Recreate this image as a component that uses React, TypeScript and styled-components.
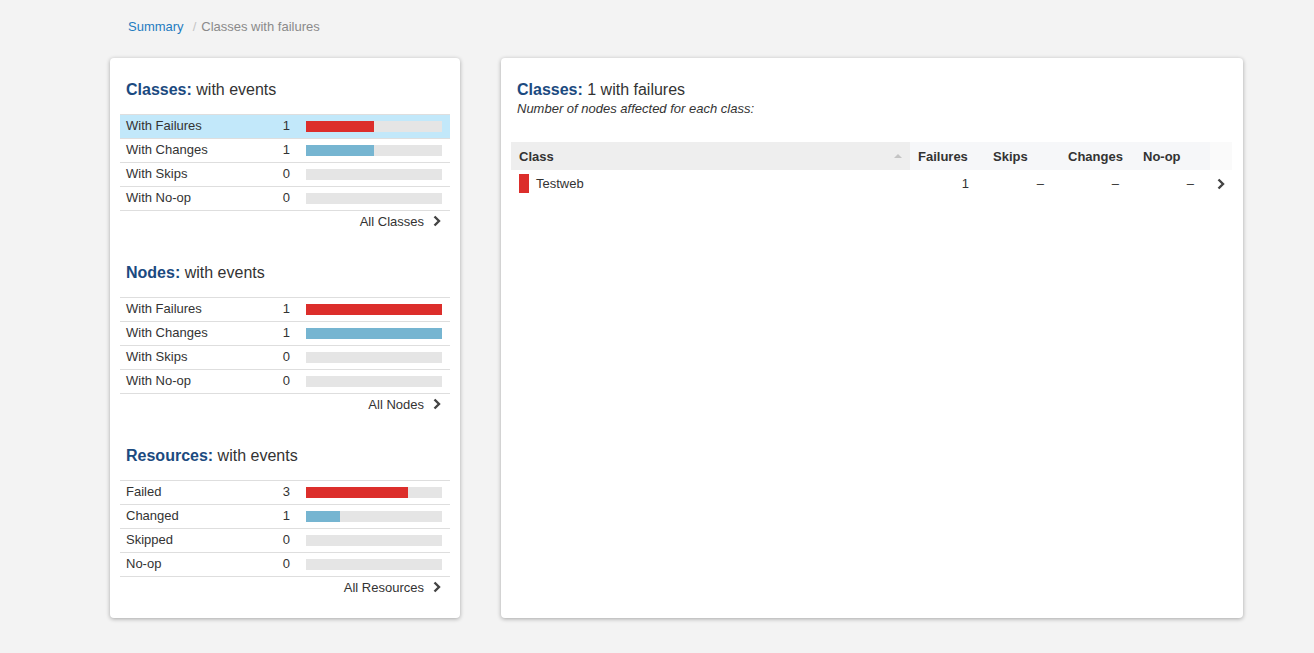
import React from "react";
import styled, { createGlobalStyle } from "styled-components";

const Global = createGlobalStyle`
  html, body { margin: 0; padding: 0; background: #f3f3f3; }
  body { font-family: "Liberation Sans", Arial, Helvetica, sans-serif; color: #333; }
`;

const Page = styled.div`
  width: 1314px;
  height: 653px;
  box-sizing: border-box;
  padding: 17px 0 0 110px;
  overflow: hidden;
`;

const Breadcrumb = styled.div`
  display: flex;
  align-items: center;
  height: 18px;
  padding-left: 18px;
  font-size: 13px;
  color: #8a8a8a;
`;

const Crumb = styled.span`
  color: #1f7cc0;
`;

const Sep = styled.span`
  color: #c4c4c4;
  margin: 0 5px 0 9px;
`;

const Columns = styled.div`
  display: flex;
  gap: 41px;
  margin-top: 23px;
`;

const Card = styled.div<{ $w: number }>`
  width: ${(p) => p.$w}px;
  height: 560px;
  box-sizing: border-box;
  background: #fff;
  border-radius: 4px;
  box-shadow: 0 1px 4px rgba(0, 0, 0, 0.32);
  padding: 22px 10px 20px;
`;

const Heading = styled.h2`
  margin: 0;
  padding-left: 6px;
  font-size: 16px;
  line-height: 20px;
  font-weight: normal;
  color: #333;
  b {
    color: #1b4a80;
    font-weight: bold;
  }
`;

const Section = styled.div`
  margin-bottom: 30px;
  &:last-child { margin-bottom: 0; }
`;

const StatTable = styled.div`
  margin-top: 14px;
  border-top: 1px solid #dedede;
`;

const StatRow = styled.div<{ $active?: boolean }>`
  display: flex;
  align-items: center;
  height: 24px;
  box-sizing: border-box;
  border-bottom: 1px solid #dedede;
  padding: 0 8px 0 6px;
  font-size: 13px;
  background: ${(p) => (p.$active ? "#c2e8fa" : "transparent")};
`;

const Label = styled.span`
  flex: 1;
  margin-top: -2px;
`;

const Count = styled.span`
  width: 20px;
  text-align: right;
  margin-right: 16px;
  margin-top: -2px;
`;

const Track = styled.div`
  width: 136px;
  height: 11px;
  background: #e5e5e5;
  display: flex;
`;

const Fill = styled.div<{ $kind: "fail" | "change" }>`
  height: 100%;
  background: ${(p) => (p.$kind === "fail" ? "#dc2e2b" : "#76b5d1")};
`;

const MoreLink = styled.div`
  display: flex;
  justify-content: flex-end;
  align-items: center;
  gap: 9px;
  height: 22px;
  padding: 0 9px 2px 0;
  box-sizing: border-box;
  font-size: 13px;
  color: #333;
`;

const Chevron = () => (
  <svg width="8" height="12" viewBox="0 0 8 12">
    <path d="M1.5 1.5 L6 6 L1.5 10.5" fill="none" stroke="#444" strokeWidth="2.4" />
  </svg>
);

const Subtitle = styled.div`
  padding-left: 6px;
  font-size: 13px;
  line-height: 16px;
  font-style: italic;
  color: #333;
  margin-top: 1px;
`;

const Grid = styled.div`
  display: grid;
  grid-template-columns: 399px 75px 75px 75px 75px 22px;
  margin-top: 25px;
`;

const Th = styled.div<{ $bg: string }>`
  height: 28px;
  display: flex;
  align-items: center;
  padding-left: 8px;
  font-size: 13px;
  font-weight: bold;
  color: #333;
  background: ${(p) => p.$bg};
  position: relative;
`;

const SortArrow = styled.span`
  position: absolute;
  right: 8px;
  top: 12px;
  width: 0;
  height: 0;
  border-left: 4px solid transparent;
  border-right: 4px solid transparent;
  border-bottom: 4px solid #c4c4c4;
`;

const Td = styled.div<{ $right?: boolean }>`
  height: 27px;
  display: flex;
  align-items: center;
  justify-content: ${(p) => (p.$right ? "flex-end" : "flex-start")};
  padding: 0 ${(p) => (p.$right ? "16px" : "0")} 0 8px;
  font-size: 13px;
  color: #333;
`;

const ClassMark = styled.span`
  width: 10px;
  height: 19px;
  background: #dc2e2b;
  margin-right: 7px;
`;

const ArrowCell = styled.div`
  height: 27px;
  display: flex;
  align-items: center;
  justify-content: center;
`;

type Stat = { label: string; count: number; pct: number; kind?: "fail" | "change" };

const sections: { title: string; link: string; rows: Stat[] }[] = [
  {
    title: "Classes:",
    link: "All Classes",
    rows: [
      { label: "With Failures", count: 1, pct: 50, kind: "fail" },
      { label: "With Changes", count: 1, pct: 50, kind: "change" },
      { label: "With Skips", count: 0, pct: 0 },
      { label: "With No-op", count: 0, pct: 0 },
    ],
  },
  {
    title: "Nodes:",
    link: "All Nodes",
    rows: [
      { label: "With Failures", count: 1, pct: 100, kind: "fail" },
      { label: "With Changes", count: 1, pct: 100, kind: "change" },
      { label: "With Skips", count: 0, pct: 0 },
      { label: "With No-op", count: 0, pct: 0 },
    ],
  },
  {
    title: "Resources:",
    link: "All Resources",
    rows: [
      { label: "Failed", count: 3, pct: 75, kind: "fail" },
      { label: "Changed", count: 1, pct: 25, kind: "change" },
      { label: "Skipped", count: 0, pct: 0 },
      { label: "No-op", count: 0, pct: 0 },
    ],
  },
];

export default function App() {
  return (
    <>
      <Global />
      <Page>
        <Breadcrumb>
          <Crumb>Summary</Crumb>
          <Sep>/</Sep>
          <span>Classes with failures</span>
        </Breadcrumb>
        <Columns>
          <Card $w={350}>
            {sections.map((s, si) => (
              <Section key={s.title}>
                <Heading>
                  <b>{s.title}</b> with events
                </Heading>
                <StatTable>
                  {s.rows.map((r, i) => (
                    <StatRow key={r.label} $active={si === 0 && i === 0}>
                      <Label>{r.label}</Label>
                      <Count>{r.count}</Count>
                      <Track>
                        {r.kind && <Fill $kind={r.kind} style={{ width: `${r.pct}%` }} />}
                      </Track>
                    </StatRow>
                  ))}
                </StatTable>
                <MoreLink>
                  {s.link}
                  <Chevron />
                </MoreLink>
              </Section>
            ))}
          </Card>
          <Card $w={742}>
            <Heading>
              <b>Classes:</b> 1 with failures
            </Heading>
            <Subtitle>Number of nodes affected for each class:</Subtitle>
            <Grid>
              <Th $bg="#eeeeee">
                Class
                <SortArrow />
              </Th>
              <Th $bg="#f6f7f9">Failures</Th>
              <Th $bg="#f6f7f9">Skips</Th>
              <Th $bg="#f6f7f9">Changes</Th>
              <Th $bg="#f6f7f9">No-op</Th>
              <Th $bg="#fafafa" />
              <Td>
                <ClassMark />
                Testweb
              </Td>
              <Td $right>1</Td>
              <Td $right>–</Td>
              <Td $right>–</Td>
              <Td $right>–</Td>
              <ArrowCell>
                <Chevron />
              </ArrowCell>
            </Grid>
          </Card>
        </Columns>
      </Page>
    </>
  );
}
